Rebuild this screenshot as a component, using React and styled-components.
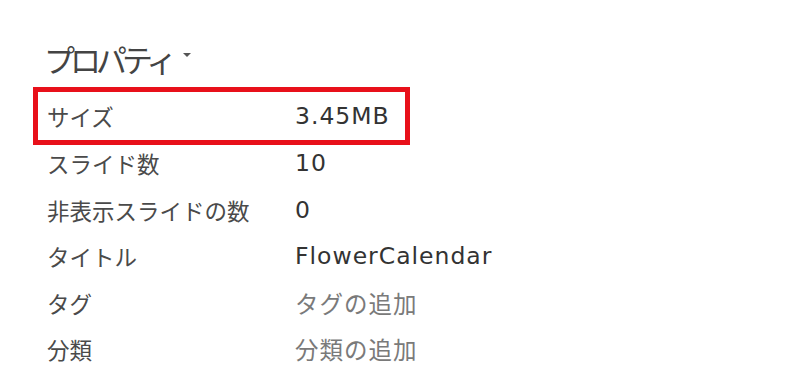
import styled, { createGlobalStyle } from "styled-components";

const GlobalStyle = createGlobalStyle`
  body {
    margin: 0;
    background: #ffffff;
  }
`;

const rows = [
  { label: "サイズ", value: "3.45MB", highlight: true },
  { label: "スライド数", value: "10" },
  { label: "非表示スライドの数", value: "0" },
  { label: "タイトル", value: "FlowerCalendar" },
  { label: "タグ", value: "タグの追加", placeholder: true },
  { label: "分類", value: "分類の追加", placeholder: true },
];

const App = () => {
  return (
    <>
      <GlobalStyle />
      <Panel>
        <Heading>
          プロパティ
          <Caret />
        </Heading>
        <List>
          {rows.map((row) => (
            <Row key={row.label} highlight={row.highlight}>
              <Label>{row.label}</Label>
              <Value placeholder={row.placeholder}>{row.value}</Value>
            </Row>
          ))}
        </List>
      </Panel>
    </>
  );
};

const Panel = styled.div`
  width: 800px;
  height: 392px;
  box-sizing: border-box;
  padding: 36px 0 0 38px;
  font-family: "Noto Sans CJK JP", "Noto Sans", sans-serif;
  overflow: hidden;
`;

const Heading = styled.div`
  display: flex;
  align-items: center;
  gap: 11px;
  padding-left: 6px;
  height: 44px;
  font-size: 31px;
  letter-spacing: -5px;
  color: #444444;
  margin-bottom: 12px;
`;

const Caret = styled.span`
  width: 0;
  height: 0;
  border-left: 4px solid transparent;
  border-right: 4px solid transparent;
  border-top: 4px solid #555555;
  margin-top: -7px;
`;

const List = styled.div`
  display: flex;
  flex-direction: column;
  width: 367px;
`;

const Row = styled.div`
  display: flex;
  align-items: center;
  height: ${({ highlight }) => (highlight ? "48px" : "46.5px")};
  padding-left: 9px;
  outline: ${({ highlight }) => (highlight ? "5px solid #e8101a" : "none")};
`;

const Label = styled.span`
  width: 248px;
  flex-shrink: 0;
  font-size: 22.5px;
  color: #4a4a4a;
  white-space: nowrap;
`;

const Value = styled.span`
  font-family: "DejaVu Sans", "Noto Sans CJK JP", sans-serif;
  font-size: 23.5px;
  letter-spacing: 1px;
  color: ${({ placeholder }) => (placeholder ? "#7a7a7a" : "#333333")};
  white-space: nowrap;
`;

export default App;
